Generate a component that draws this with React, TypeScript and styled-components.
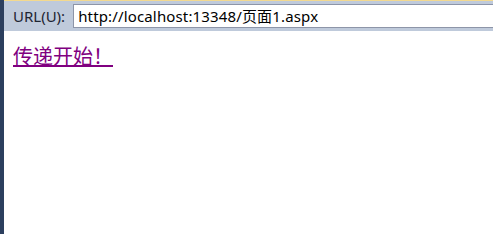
import React from "react";
import styled, { createGlobalStyle } from "styled-components";

const GlobalStyle = createGlobalStyle`
  html, body {
    margin: 0;
    padding: 0;
    background: #ffffff;
  }
  body {
    font-family: "Noto Sans", "Noto Sans CJK SC", sans-serif;
  }
`;

const Frame = styled.div`
  display: flex;
  width: 493px;
  height: 234px;
  overflow: hidden;
`;

const Stripe = styled.div`
  width: 4px;
  flex: none;
  background: #2c3f5e;
`;

const Main = styled.div`
  flex: 1;
  display: flex;
  flex-direction: column;
`;

const Toolbar = styled.div`
  height: 31px;
  box-sizing: border-box;
  border-top: 1px solid #f3d98f;
  background: #bfcadb;
  display: flex;
  align-items: center;
  padding-left: 9px;
  padding-bottom: 1px;
  gap: 8px;
`;

const Label = styled.span`
  font-family: "Noto Sans", sans-serif;
  font-size: 15px;
  color: #1e2533;
`;

const UrlBox = styled.div`
  flex: 1;
  height: 24px;
  box-sizing: border-box;
  background: #ffffff;
  border: 1px solid #8d95a8;
  border-right: none;
  display: flex;
  align-items: center;
  padding-left: 4px;
  font-family: "Noto Sans", "Noto Sans CJK SC", sans-serif;
  font-size: 15px;
  letter-spacing: 0.15px;
  color: #000000;
  white-space: nowrap;
`;

const Content = styled.div`
  padding: 10px 9px;
`;

const Link = styled.a`
  font-family: "Noto Sans CJK SC", sans-serif;
  font-size: 20px;
  color: #800080;
  text-decoration: underline;
`;

export default function App() {
  return (
    <Frame>
      <GlobalStyle />
      <Stripe />
      <Main>
        <Toolbar>
          <Label>URL(U):</Label>
          <UrlBox>http://localhost:13348/页面1.aspx</UrlBox>
        </Toolbar>
        <Content>
          <Link href="#">传递开始！</Link>
        </Content>
      </Main>
    </Frame>
  );
}
